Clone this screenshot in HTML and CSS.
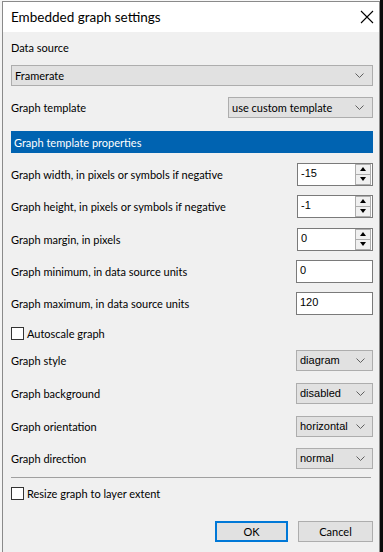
FILE: index.html
```html
<!DOCTYPE html>
<html>
<head>
<meta charset="utf-8">
<link rel="stylesheet" href="styles.css">
</head>
<body>
<div class="screen">
  <div class="bg-left"></div>
  <div class="window">
    <div class="titlebar">
      <span class="title">Embedded graph settings</span>
      <svg class="close" width="14" height="14" viewBox="0 0 14 14"><path d="M1 1 L13 13 M13 1 L1 13" stroke="#000" stroke-width="1.1" fill="none"/></svg>
    </div>
    <div class="content">
      <div class="row r-ds"><span class="label">Data source</span></div>
      <div class="row r-dsel">
        <div class="select wide"><span>Framerate</span><svg class="chev" width="9" height="5" viewBox="0 0 9 5"><path d="M0.5 0.5 L4.5 4.5 L8.5 0.5" stroke="#606060" fill="none"/></svg></div>
      </div>
      <div class="row r-tpl">
        <span class="label">Graph template</span>
        <div class="select tpl"><span>use custom template</span><svg class="chev" width="9" height="5" viewBox="0 0 9 5"><path d="M0.5 0.5 L4.5 4.5 L8.5 0.5" stroke="#606060" fill="none"/></svg></div>
      </div>
      <div class="row r-hdr"><div class="header">Graph template properties</div></div>
      <div class="row r-32">
        <span class="label">Graph width, in pixels or symbols if negative</span>
        <div class="spin"><div class="field">-15</div><div class="btns"><div class="sbtn"><span class="up"></span></div><div class="sbtn"><span class="down"></span></div></div></div>
      </div>
      <div class="row r-32">
        <span class="label">Graph height, in pixels or symbols if negative</span>
        <div class="spin"><div class="field">-1</div><div class="btns"><div class="sbtn"><span class="up"></span></div><div class="sbtn"><span class="down"></span></div></div></div>
      </div>
      <div class="row r-34">
        <span class="label">Graph margin, in pixels</span>
        <div class="spin"><div class="field">0</div><div class="btns"><div class="sbtn"><span class="up"></span></div><div class="sbtn"><span class="down"></span></div></div></div>
      </div>
      <div class="row r-30">
        <span class="label">Graph minimum, in data source units</span>
        <div class="textbox">0</div>
      </div>
      <div class="row r-34">
        <span class="label">Graph maximum, in data source units</span>
        <div class="textbox">120</div>
      </div>
      <div class="row r-26 check-row">
        <span class="checkbox"></span><span class="label">Autoscale graph</span>
      </div>
      <div class="row r-28">
        <span class="label">Graph style</span>
        <div class="select small"><span>diagram</span><svg class="chev" width="9" height="5" viewBox="0 0 9 5"><path d="M0.5 0.5 L4.5 4.5 L8.5 0.5" stroke="#606060" fill="none"/></svg></div>
      </div>
      <div class="row r-38">
        <span class="label">Graph background</span>
        <div class="select small"><span>disabled</span><svg class="chev" width="9" height="5" viewBox="0 0 9 5"><path d="M0.5 0.5 L4.5 4.5 L8.5 0.5" stroke="#606060" fill="none"/></svg></div>
      </div>
      <div class="row r-28">
        <span class="label">Graph orientation</span>
        <div class="select small"><span>horizontal</span><svg class="chev" width="9" height="5" viewBox="0 0 9 5"><path d="M0.5 0.5 L4.5 4.5 L8.5 0.5" stroke="#606060" fill="none"/></svg></div>
      </div>
      <div class="row r-36">
        <span class="label">Graph direction</span>
        <div class="select small"><span>normal</span><svg class="chev" width="9" height="5" viewBox="0 0 9 5"><path d="M0.5 0.5 L4.5 4.5 L8.5 0.5" stroke="#606060" fill="none"/></svg></div>
      </div>
      <div class="separator"></div>
      <div class="row r-28 check-row">
        <span class="checkbox"></span><span class="label">Resize graph to layer extent</span>
      </div>
      <div class="buttons">
        <div class="button ok">OK</div>
        <div class="button">Cancel</div>
      </div>
    </div>
  </div>
  <div class="bg-right"></div>
</div>
</body>
</html>
```

FILE: styles.css
```css
* { box-sizing: border-box; }
html, body { margin: 0; padding: 0; }
body {
  width: 383px;
  height: 552px;
  overflow: hidden;
  background: #f7f7f7;
  font-family: Lato, "Noto Sans", sans-serif;
  font-size: 11px;
  color: #000;
}
.screen {
  display: flex;
  height: 552px;
  padding-top: 1px;
}
.bg-left {
  width: 2px;
  background: #f4f4f4;
}
.bg-right {
  width: 3px;
  background: #0a0a0a;
  margin-top: -1px;
}
.window {
  flex: 1;
  border-left: 1px solid #8a8a8a;
  border-right: 1px solid #8a8a8a;
  border-top: 1px solid #8a8a8a;
  background: #f0f0f0;
  display: flex;
  flex-direction: column;
}
.titlebar {
  height: 30px;
  background: #fff;
  display: flex;
  align-items: center;
  justify-content: space-between;
  padding: 0 5px 0 8px;
}
.title {
  font-size: 13.5px;
  color: #000;
  padding-bottom: 1px;
}
.content {
  padding: 0 6px 0 8px;
  display: flex;
  flex-direction: column;
}
.row {
  display: flex;
  align-items: center;
  justify-content: space-between;
}
.r-ds { height: 30px; }
.r-dsel { height: 27px; }
.r-tpl { height: 37px; }
.r-hdr { height: 32px; }
.r-32 { height: 32px; }
.r-34 { height: 34px; }
.r-30 { height: 30px; }
.r-26 { height: 26px; }
.r-28 { height: 28px; }
.r-38 { height: 38px; }
.r-36 { height: 36px; }
.label { white-space: nowrap; }
.select {
  height: 21px;
  background: #e1e1e1;
  border: 1px solid #adadad;
  display: flex;
  align-items: center;
  justify-content: space-between;
  padding: 0 8px 0 3px;
}
.select .chev { flex: none; }
.wide { width: 362px; }
.tpl { width: 145px; }
.small {
  width: 77px;
  height: 21px;
  font-family: "Liberation Sans", Arial, sans-serif;
  font-size: 11px;
  padding: 0 7px 0 3px;
}
.header {
  width: 362px;
  height: 22px;
  background: #0063b1;
  color: #fff;
  display: flex;
  align-items: center;
  padding-left: 3px;
}
.spin {
  display: flex;
  align-items: center;
  width: 76px;
  height: 23px;
  border: 1px solid #7a7a7a;
  background: #fff;
}
.spin .field {
  flex: 1;
  font-family: "Liberation Sans", Arial, sans-serif;
  font-size: 11px;
  padding-left: 3px;
  padding-bottom: 2px;
}
.btns {
  display: flex;
  flex-direction: column;
  width: 16px;
  height: 21px;
  margin-right: 1px;
}
.sbtn {
  flex: 1;
  border: 1px solid #adadad;
  background: #f0f0f0;
  display: flex;
  align-items: center;
  justify-content: center;
}
.sbtn + .sbtn { border-top: none; }
.up {
  width: 0; height: 0;
  border-left: 3.5px solid transparent;
  border-right: 3.5px solid transparent;
  border-bottom: 4px solid #000;
}
.down {
  width: 0; height: 0;
  border-left: 3.5px solid transparent;
  border-right: 3.5px solid transparent;
  border-top: 4px solid #000;
}
.textbox {
  width: 77px;
  height: 23px;
  border: 1px solid #7a7a7a;
  background: #fff;
  font-family: "Liberation Sans", Arial, sans-serif;
  font-size: 11px;
  padding: 3px 0 0 3px;
}
.check-row { justify-content: flex-start; gap: 3px; }
.checkbox {
  width: 13px;
  height: 13px;
  border: 1px solid #333;
  background: #fff;
}
.separator {
  height: 1px;
  background: #a0a0a0;
  margin: 1px 2px 1px 0;
}
.buttons {
  display: flex;
  justify-content: flex-end;
  gap: 10px;
  padding-top: 14px;
}
.button {
  width: 75px;
  height: 21px;
  background: #e1e1e1;
  border: 1px solid #adadad;
  display: flex;
  align-items: center;
  justify-content: center;
}
.button.ok {
  width: 73px;
  border: 2px solid #0078d7;
}
```
